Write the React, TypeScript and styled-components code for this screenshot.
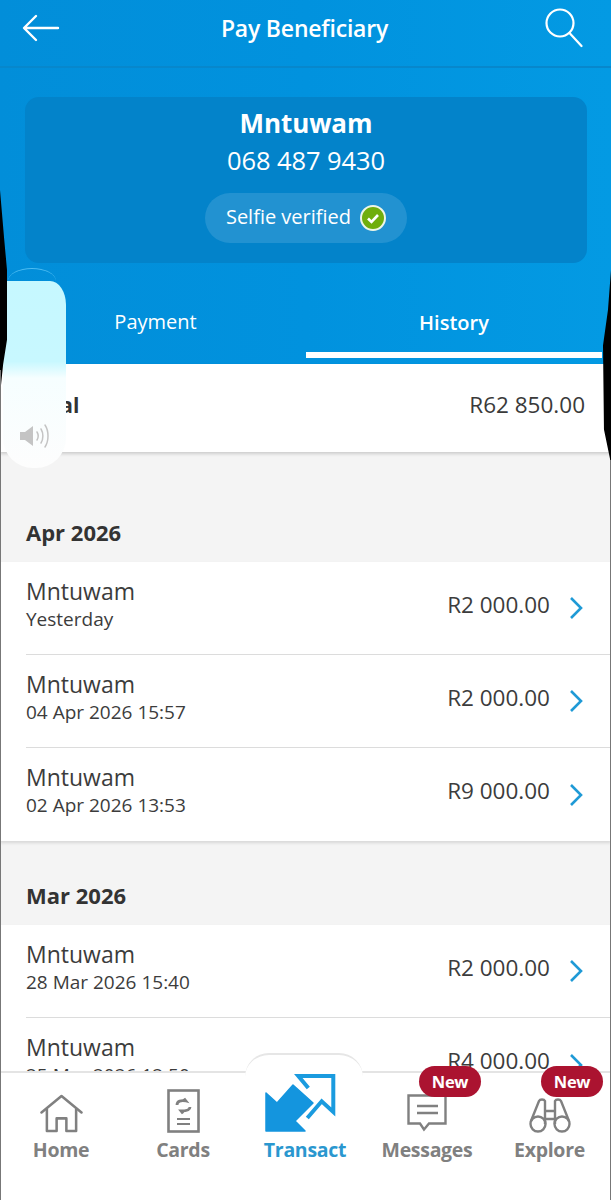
import React from "react";
import styled, { createGlobalStyle } from "styled-components";

const Global = createGlobalStyle`
  html, body { margin: 0; padding: 0; background: #000; }
  body { font-family: "Open Sans", "Noto Sans", sans-serif; }
`;

const Screen = styled.div`
  position: relative;
  width: 611px;
  height: 1200px;
  overflow: hidden;
  background: #f4f4f4;
`;

const Blue = styled.div`
  background: linear-gradient(90deg, #028ed9 0%, #0192de 50%, #039ae3 100%);
`;

const TopBar = styled.header`
  height: 68px;
  box-sizing: border-box;
  padding: 0 28px 10px 22px;
  display: flex;
  align-items: center;
  justify-content: space-between;
  border-bottom: 2px solid #0787cc;
`;

const Title = styled.h1`
  margin: 0 0 0 4px;
  font-size: 23px;
  font-weight: 600;
  color: #fff;
  letter-spacing: -0.2px;
`;

const Card = styled.section`
  margin: 29px 24px 0 25px;
  height: 166px;
  border-radius: 14px;
  background: #0383ca;
  display: flex;
  flex-direction: column;
  align-items: center;
  color: #fff;
`;

const Name = styled.div`
  margin-top: 8px;
  font-size: 26px;
  line-height: 36px;
  font-weight: 700;
  letter-spacing: -0.1px;
`;

const Phone = styled.div`
  font-size: 25.5px;
  line-height: 38px;
  letter-spacing: -0.1px;
`;

const Pill = styled.div`
  margin-top: 14px;
  height: 50px;
  box-sizing: border-box;
  padding: 0 21px 0 21px;
  border-radius: 25px;
  background: #2292d1;
  display: flex;
  align-items: center;
  gap: 9px;
  font-size: 20px;
`;

const PillText = styled.span`
  margin-top: -3px;
`;

const Tabs = styled.nav`
  display: grid;
  grid-template-columns: 306px 1fr;
  height: 101px;
`;

const Tab = styled.div<{ $active?: boolean }>`
  display: flex;
  align-items: flex-start;
  justify-content: center;
  box-sizing: border-box;
  padding-top: ${(p) => (p.$active ? "46px" : "45px")};
  padding-left: ${(p) => (p.$active ? "0" : "5px")};
  color: #fff;
  font-size: 20px;
  line-height: 28px;
  font-weight: ${(p) => (p.$active ? 600 : 400)};
  border-bottom: ${(p) => (p.$active ? "6px solid #fff" : "none")};
  height: 95px;
  margin-right: ${(p) => (p.$active ? "9px" : "0")};
`;

const TotalRow = styled.div`
  height: 88px;
  background: #fff;
  box-sizing: border-box;
  padding: 0 26px;
  display: flex;
  align-items: center;
  justify-content: space-between;
  box-shadow: 0 2px 3px rgba(0, 0, 0, 0.16);
  color: #333;
  position: relative;
`;

const TotalLabel = styled.span`
  font-size: 21px;
  font-weight: 700;
  margin-top: -7px;
`;

const TotalAmount = styled.span`
  font-size: 22.5px;
  margin-top: -7px;
  color: #3a3a3a;
`;

const MonthLabel = styled.h2<{ $first?: boolean }>`
  margin: 0;
  padding: ${(p) => (p.$first ? "64px" : "38px")} 26px 0;
  height: 46px;
  font-size: 22px;
  line-height: 32px;
  font-weight: 700;
  color: #333;
`;

const MonthList = styled.div`
  background: #fff;
  box-shadow: 0 2px 3px rgba(0, 0, 0, 0.12);
`;

const Row = styled.div`
  height: 93px;
  box-sizing: border-box;
  margin-left: 26px;
  padding-right: 28px;
  display: flex;
  align-items: center;
  justify-content: space-between;
  border-bottom: 1px solid #dcdcdc;
  color: #3c3c3c;
  &:last-child { border-bottom: none; }
`;

const RowText = styled.div`
  display: flex;
  flex-direction: column;
  margin-top: -9px;
`;

const RowName = styled.span`
  font-size: 23px;
  line-height: 31px;
`;

const RowDate = styled.span`
  font-size: 19px;
  line-height: 25px;
`;

const RowRight = styled.div`
  display: flex;
  align-items: center;
  gap: 19px;
  margin-top: -5px;
`;

const RowAmount = styled.span`
  font-size: 22.5px;
  margin-top: -3px;
`;

const ChevronSvg = styled.svg`
  margin-top: 5px;
`;

const Volume = styled.div`
  position: absolute;
  left: 3px;
  top: 281px;
  width: 63px;
  height: 187px;
  border-radius: 0 16px 30px 30px / 0 24px 30px 30px;
  background: linear-gradient(180deg, #c6f8ff 0%, #c8f8ff 43%, #f6feff 52%, #fdfdfd 100%);
  display: flex;
  align-items: flex-end;
  justify-content: center;
  padding-bottom: 19px;
  box-sizing: border-box;
`;

const VolumeArc = styled.div`
  position: absolute;
  left: 8px;
  top: 268px;
  width: 48px;
  height: 13px;
  box-sizing: border-box;
  border-top: 1.5px solid #4dbcf2;
  border-radius: 24px 24px 0 0 / 13px 13px 0 0;
`;

const EdgeLeft = styled.div`
  position: absolute;
  left: 0;
  top: 190px;
  width: 7px;
  height: 205px;
  background: #000;
  clip-path: polygon(0 0, 60% 24%, 100% 39%, 100% 73%, 45% 85%, 0 100%);
`;

const EdgeRight = styled.div`
  position: absolute;
  right: 0;
  top: 270px;
  width: 8px;
  height: 210px;
  background: #000;
  clip-path: polygon(100% 0, 62% 19%, 0 36%, 12% 76%, 88% 90%, 100% 100%);
`;

const Hairline = styled.div<{ $side: "left" | "right"; $top: number }>`
  position: absolute;
  ${(p) => p.$side}: 0;
  top: ${(p) => p.$top}px;
  bottom: 0;
  width: 1px;
  background: #777;
  z-index: 3;
`;

const BottomNav = styled.nav`
  position: absolute;
  left: 0;
  right: 0;
  bottom: 0;
  height: 127px;
  background: #fff;
  border-top: 2px solid #e4e4e4;
  display: grid;
  grid-template-columns: 122px 122px 122px 122px 123px;
`;

const Bump = styled.div`
  position: absolute;
  left: 245px;
  top: -20px;
  width: 118px;
  height: 22px;
  background: #fff;
  border-top: 2px solid #e6e6e6;
  border-radius: 26px 26px 0 0;
`;

const NavItem = styled.div<{ $active?: boolean }>`
  position: relative;
  display: flex;
  flex-direction: column;
  align-items: center;
  padding-top: 15px;
  font-size: 19.5px;
  font-weight: 700;
  letter-spacing: -0.3px;
  color: ${(p) => (p.$active ? "#2a97cf" : "#808080")};
`;

const NavIcon = styled.div`
  height: 45px;
  display: flex;
  align-items: flex-end;
  justify-content: center;
  margin-bottom: 3px;
`;

const TransactSvg = styled.svg`
  margin-left: -9px;
`;

const NewBadge = styled.span`
  position: absolute;
  top: -7px;
  left: 53px;
  width: 62px;
  height: 31px;
  border-radius: 16px;
  background: #ab1330;
  color: #fff;
  font-size: 16.5px;
  font-weight: 700;
  display: flex;
  align-items: center;
  justify-content: center;
`;

const Chevron = () => (
  <ChevronSvg width="14" height="24" viewBox="0 0 14 24" fill="none">
    <path d="M2 2l10 10L2 22" stroke="#1f9ad6" strokeWidth="2.6" />
  </ChevronSvg>
);

const Back = () => (
  <svg width="38" height="28" viewBox="0 0 38 28" fill="none" stroke="#fff" strokeWidth="2.4" strokeLinecap="round" strokeLinejoin="round">
    <path d="M36 14H3M14 2L2 14l12 12" />
  </svg>
);

const Search = () => (
  <svg width="38" height="40" viewBox="0 0 38 40" fill="none" stroke="#fff" strokeWidth="2.2" strokeLinecap="round">
    <circle cx="15" cy="15" r="13.5" />
    <path d="M24.5 25L36.5 38" />
  </svg>
);

const Verified = () => (
  <svg width="26" height="26" viewBox="0 0 26 26">
    <circle cx="13" cy="13" r="12" fill="#6fae0c" stroke="#eef6e6" strokeWidth="2" />
    <path d="M8 13.5l3.5 3.5L18 10" fill="none" stroke="#fff" strokeWidth="2.6" />
  </svg>
);

const Speaker = () => (
  <svg width="32" height="26" viewBox="0 0 32 26" fill="none">
    <path d="M1 9h5l8-6v20l-8-6H1z" fill="#c4c4c4" />
    <path d="M18 9c1.5 2.5 1.5 5.5 0 8M22 6c2.5 4 2.5 10 0 14M26 2c4 6 4 16 0 22" stroke="#c4c4c4" strokeWidth="1.5" strokeLinecap="round" />
  </svg>
);

const Home = () => (
  <svg width="43" height="39" viewBox="0 0 44 40" fill="none" stroke="#808080" strokeWidth="2.6" strokeLinejoin="round">
    <path d="M1.5 19L22 2l20.5 17" strokeLinecap="round" />
    <path d="M7 15v23h10V25h10v13h10V15" />
  </svg>
);

const CardIcon = () => (
  <svg width="33" height="44" viewBox="0 0 33 44" fill="none" stroke="#808080">
    <rect x="1.5" y="1.5" width="30" height="41" strokeWidth="2.6" />
    <path d="M10 16c0-4 4-5 9-4l-2-2.5M23 18c0 3-4 4-9 4l2 2.5" strokeWidth="2.8" />
    <path d="M10 30h13M10 35h13" strokeWidth="2.2" />
  </svg>
);

const TransactIcon = () => (
  <TransactSvg width="72" height="60" viewBox="0 0 72 60">
    <path d="M1 58V20l11 10L28 12l20 18-18 18 10 10z" fill="#1495de" stroke="#1495de" strokeWidth="1.5" strokeLinejoin="round" />
    <path d="M43.3 15L33.3 3h35v36L56.7 28.3 42.3 45" fill="none" stroke="#1a9bdf" strokeWidth="4" />
  </TransactSvg>
);

const MessageIcon = () => (
  <svg width="40" height="39" viewBox="0 0 40 39" fill="none" stroke="#808080" strokeWidth="2.4">
    <path d="M1.5 1.5h37v28H22l-5 6-4-6H1.5z" />
    <path d="M10 12h21M10 19h21" />
  </svg>
);

const Binoculars = () => (
  <svg width="42" height="36" viewBox="0 0 42 36" fill="none" stroke="#808080" strokeWidth="2.4">
    <circle cx="9" cy="27" r="7.5" />
    <circle cx="33" cy="27" r="7.5" />
    <path d="M2 24L10 4c1-2 5-2 6 0v23M40 24L32 4c-1-2-5-2-6 0v23M16 14h10M16 22h10" />
  </svg>
);

const months = [
  {
    label: "Apr 2026",
    rows: [
      ["Yesterday", "R2 000.00"],
      ["04 Apr 2026 15:57", "R2 000.00"],
      ["02 Apr 2026 13:53", "R9 000.00"],
    ],
  },
  {
    label: "Mar 2026",
    rows: [
      ["28 Mar 2026 15:40", "R2 000.00"],
      ["25 Mar 2026 12:50", "R4 000.00"],
    ],
  },
];

export default function App() {
  return (
    <Screen>
      <Global />
      <Blue>
        <TopBar>
          <Back />
          <Title>Pay Beneficiary</Title>
          <Search />
        </TopBar>
        <Card>
          <Name>Mntuwam</Name>
          <Phone>068 487 9430</Phone>
          <Pill>
            <PillText>Selfie verified</PillText>
            <Verified />
          </Pill>
        </Card>
        <Tabs>
          <Tab>Payment</Tab>
          <Tab $active>History</Tab>
        </Tabs>
      </Blue>
      <TotalRow>
        <TotalLabel>Total</TotalLabel>
        <TotalAmount>R62 850.00</TotalAmount>
      </TotalRow>
      {months.map((m, i) => (
        <React.Fragment key={m.label}>
          <MonthLabel $first={i === 0}>{m.label}</MonthLabel>
          <MonthList>
            {m.rows.map(([date, amount]) => (
              <Row key={date}>
                <RowText>
                  <RowName>Mntuwam</RowName>
                  <RowDate>{date}</RowDate>
                </RowText>
                <RowRight>
                  <RowAmount>{amount}</RowAmount>
                  <Chevron />
                </RowRight>
              </Row>
            ))}
          </MonthList>
        </React.Fragment>
      ))}
      <VolumeArc />
      <Volume>
        <Speaker />
      </Volume>
      <EdgeLeft />
      <EdgeRight />
      <BottomNav>
        <Bump />
        <NavItem>
          <NavIcon><Home /></NavIcon>
          Home
        </NavItem>
        <NavItem>
          <NavIcon><CardIcon /></NavIcon>
          Cards
        </NavItem>
        <NavItem $active>
          <NavIcon><TransactIcon /></NavIcon>
          Transact
        </NavItem>
        <NavItem>
          <NavIcon><MessageIcon /></NavIcon>
          Messages
          <NewBadge>New</NewBadge>
        </NavItem>
        <NavItem>
          <NavIcon><Binoculars /></NavIcon>
          Explore
          <NewBadge>New</NewBadge>
        </NavItem>
      </BottomNav>
      <Hairline $side="left" $top={370} />
      <Hairline $side="right" $top={460} />
    </Screen>
  );
}
